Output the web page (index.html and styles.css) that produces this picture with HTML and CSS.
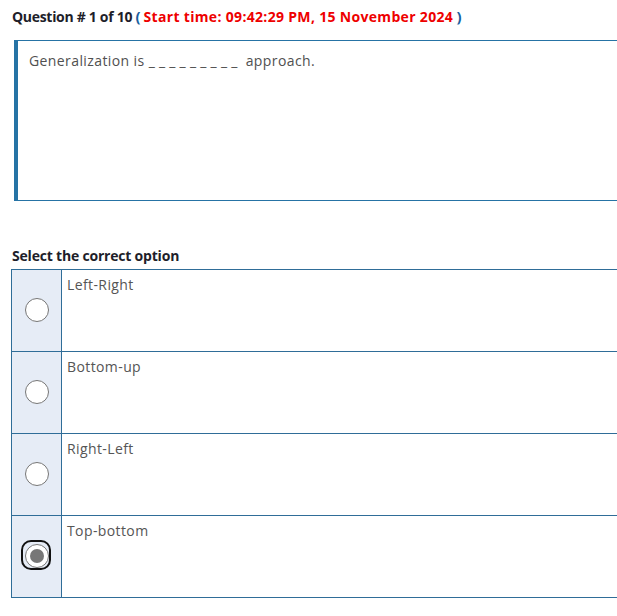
FILE: index.html
```html
<!DOCTYPE html>
<html>
<head>
<meta charset="utf-8">
<link rel="stylesheet" href="styles.css">
</head>
<body>
<div class="page">
  <h1 class="qhead">Question # 1 of 10 <span class="paren">(</span> <span class="time">Start time: 09:42:29 PM, 15 November 2024</span> <span class="paren">)</span></h1>
  <div class="qbox">
    <p class="qtext">Generalization is <span class="blank">_________</span> approach.</p>
  </div>
  <h2 class="sel">Select the correct option</h2>
  <table class="opts">
    <tr>
      <td class="rc"><span class="radio"></span></td>
      <td class="ot">Left-Right</td>
    </tr>
    <tr>
      <td class="rc"><span class="radio"></span></td>
      <td class="ot">Bottom-up</td>
    </tr>
    <tr>
      <td class="rc"><span class="radio"></span></td>
      <td class="ot">Right-Left</td>
    </tr>
    <tr>
      <td class="rc"><span class="radio checked"></span></td>
      <td class="ot">Top-bottom</td>
    </tr>
  </table>
</div>
</body>
</html>
```

FILE: styles.css
```css
html, body {
  margin: 0;
  padding: 0;
  background: #fff;
  overflow: hidden;
}
body {
  font-family: "Open Sans", "Noto Sans", sans-serif;
}
.page {
  width: 617px;
  overflow: hidden;
  padding-top: 7px;
}
.qhead {
  margin: 0 0 0 12px;
  height: 20px;
  font-size: 14px;
  line-height: 20px;
  font-weight: 700;
  color: #1e1e2a;
  letter-spacing: -0.3px;
}
.paren {
  color: #1a5fa0;
  font-size: 15px;
  line-height: 18px;
}
.time {
  color: #ee0000;
  letter-spacing: 0.32px;
}
.qbox {
  margin: 13px -40px 0 14px;
  height: 159px;
  border-top: 1px solid #2673a5;
  border-bottom: 1px solid #2673a5;
  border-left: 4px solid #2673a5;
  box-sizing: content-box;
}
.qtext {
  margin: 0;
  padding: 10px 0 0 11px;
  font-size: 14px;
  line-height: 20px;
  color: #505050;
  letter-spacing: 0.4px;
}
.blank {
  letter-spacing: 4.2px;
}
.sel {
  margin: 45px 0 0 12px;
  font-size: 14px;
  line-height: 20px;
  font-weight: 700;
  color: #1e1e2a;
  letter-spacing: -0.2px;
}
.opts {
  margin: 3px 0 0 11px;
  border-collapse: collapse;
  width: 640px;
}
.opts td {
  border: 1px solid #2f6d98;
  height: 82px;
  padding: 0;
  box-sizing: border-box;
}
.rc {
  width: 50px;
  background: #e6ecf6;
  vertical-align: middle;
}
.opts td.ot {
  vertical-align: top;
  padding: 5px 0 0 5px;
  font-size: 14px;
  line-height: 20px;
  color: #555;
  letter-spacing: 0.4px;
}
.radio {
  display: block;
  margin: -2px auto 0;
  width: 22px;
  height: 22px;
  border: 1px solid #767676;
  border-radius: 50%;
  background: #fff;
  position: relative;
}
.radio.checked::before {
  content: "";
  position: absolute;
  left: -5px;
  top: -5px;
  width: 30px;
  height: 30px;
  box-sizing: border-box;
  border: 2px solid #111;
  border-radius: 10px;
}
.radio.checked::after {
  content: "";
  position: absolute;
  left: 4px;
  top: 4px;
  width: 14px;
  height: 14px;
  border-radius: 50%;
  background: #777;
}
```
